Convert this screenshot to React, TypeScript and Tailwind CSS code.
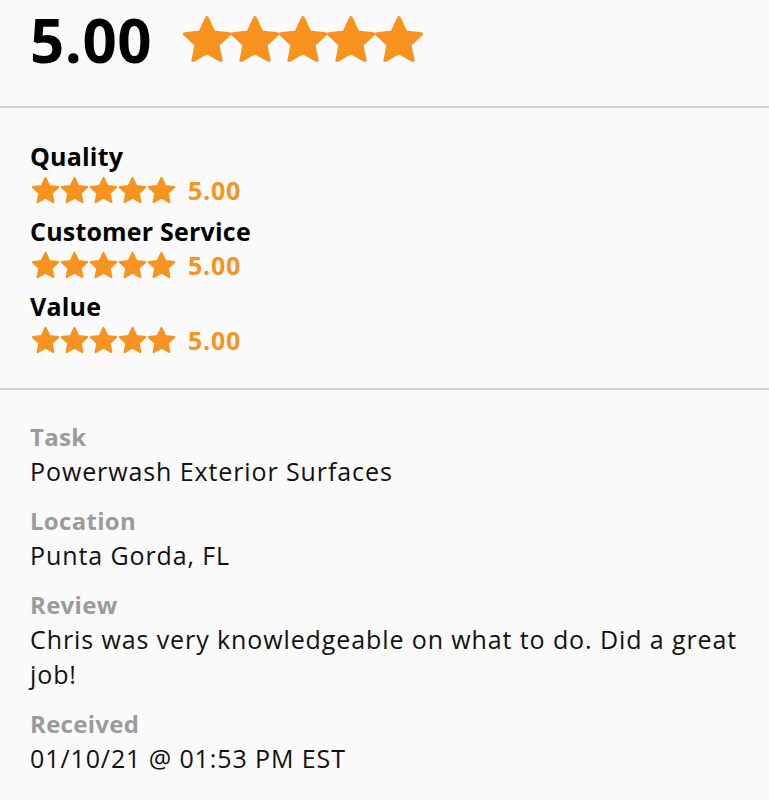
import React from "react";

const Star = ({ size }: { size: number }) => (
  <svg width={size} height={size} viewBox="0 0 24 24" className="shrink-0">
    <path
      d="M12 2.2l2.95 6.35 6.95.8-5.15 4.75 1.4 6.85L12 17.5l-6.15 3.45 1.4-6.85L2.1 9.35l6.95-.8z"
      fill="#f7931e"
      stroke="#f7931e"
      strokeWidth="1.6"
      strokeLinejoin="round"
    />
  </svg>
);

const Stars = ({ size, gap }: { size: number; gap: string }) => (
  <div className={`flex items-center ${gap}`}>
    {[0, 1, 2, 3, 4].map((i) => (
      <Star key={i} size={size} />
    ))}
  </div>
);

const font = { fontFamily: '"Open Sans", "Liberation Sans", sans-serif' };

export default function App() {
  const cats = ["Quality", "Customer Service", "Value"];
  const details: [string, string][] = [
    ["Task", "Powerwash Exterior Surfaces"],
    ["Location", "Punta Gorda, FL"],
    ["Review", "Chris was very knowledgeable on what to do. Did a great job!"],
    ["Received", "01/10/21 @ 01:53 PM EST"],
  ];
  return (
    <div className="min-h-[800px] w-[769px] bg-[#fafafa] text-[#111]" style={font}>
      <div className="h-[108px] border-b-2 border-[#d2d2d2] pl-[30px]">
        <div className="flex h-[79px] items-center">
          <span className="text-[60px] font-bold leading-none tracking-[0.5px] text-black">5.00</span>
          <div className="ml-[28px]">
            <Stars size={54} gap="-space-x-[6px]" />
          </div>
        </div>
      </div>

      <div className="flex flex-col gap-[7px] border-b-2 border-[#d2d2d2] px-[30px] py-[31px]">
        {cats.map((c) => (
          <div key={c} className="flex flex-col">
            <div className="h-[34px] text-[25px] font-bold leading-[34px] tracking-[0.2px] text-black">{c}</div>
            <div className="flex h-[34px] items-center">
              <Stars size={31} gap="-space-x-[2px]" />
              <span className="ml-[11px] text-[25px] font-bold leading-none tracking-[0.8px] text-[#f7931e]">5.00</span>
            </div>
          </div>
        ))}
      </div>

      <div className="flex flex-col gap-[15px] pl-[30px] pr-[28px] pt-[30px] pb-[27px]">
        {details.map(([l, v]) => (
          <div key={l} className="flex flex-col">
            <div className="text-[24px] font-bold leading-[34px] tracking-[0.3px] text-[#9b9b9b]">{l}</div>
            <div className="text-[25px] leading-[35px] tracking-[0.9px] text-[#111]">{v}</div>
          </div>
        ))}
      </div>
    </div>
  );
}
